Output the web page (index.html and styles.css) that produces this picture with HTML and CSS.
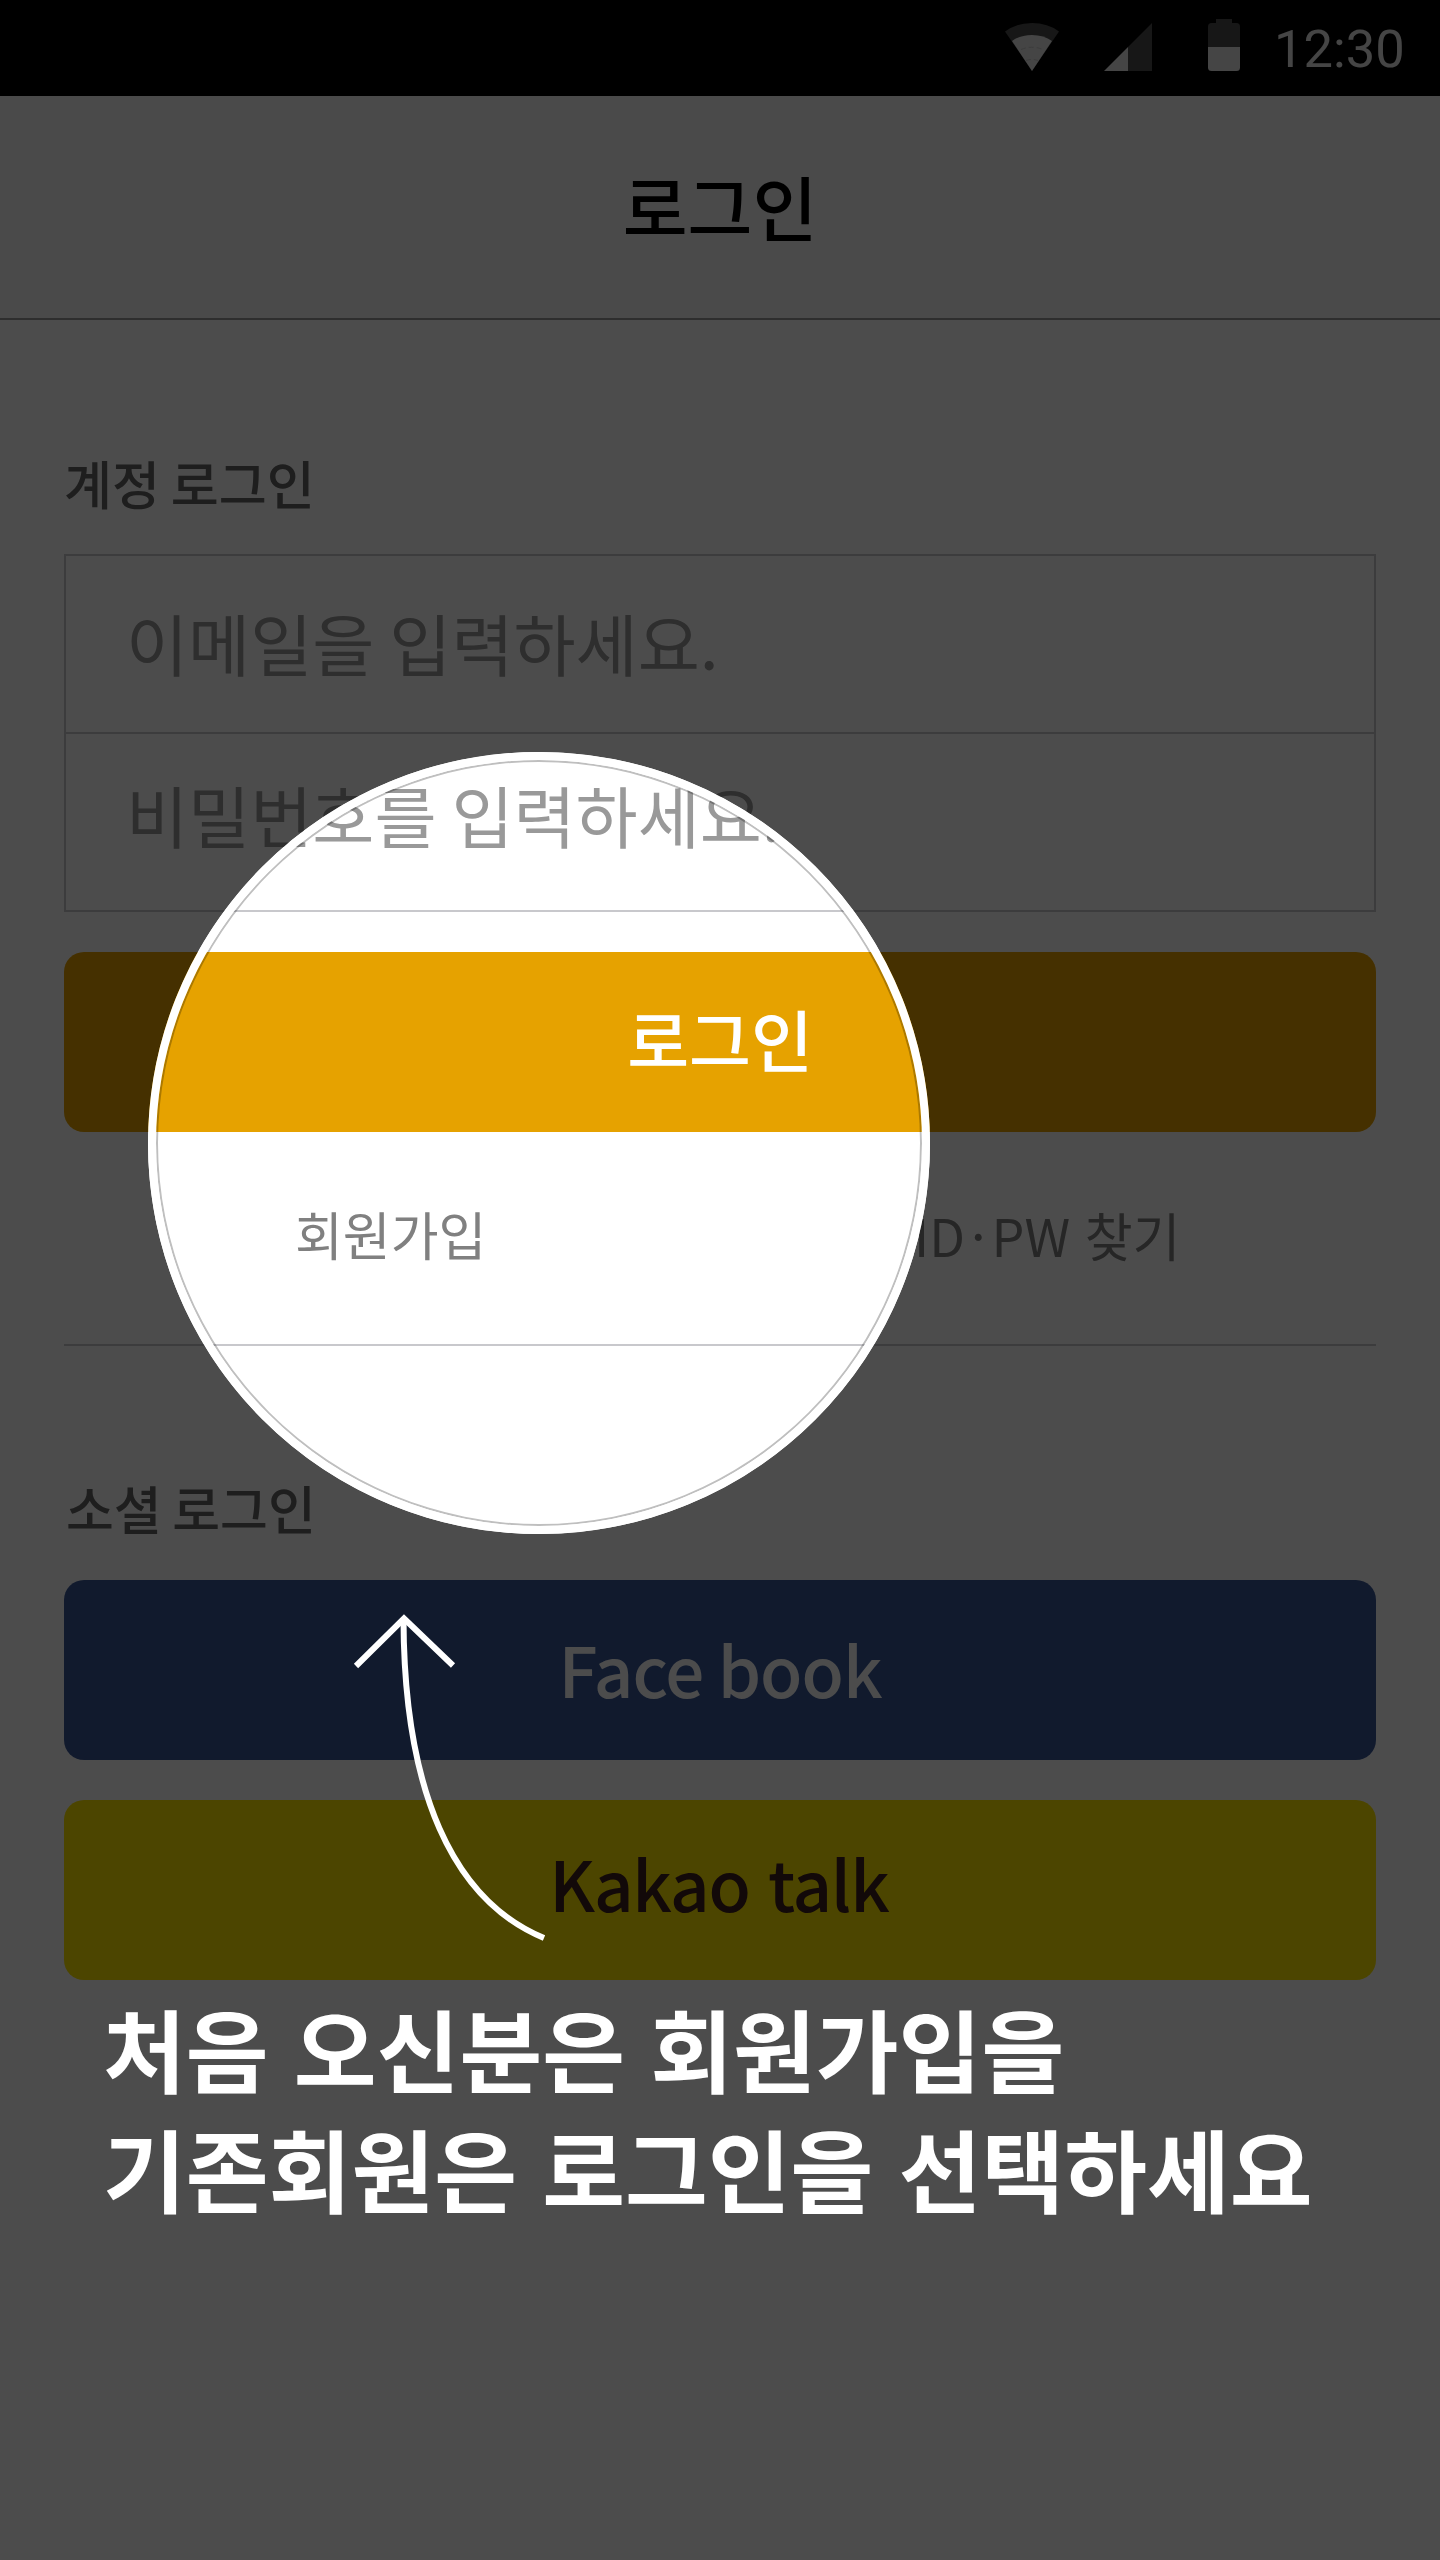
FILE: index.html
```html
<!DOCTYPE html>
<html lang="ko">
<head>
<meta charset="utf-8">
<title>로그인</title>
<link rel="stylesheet" href="styles.css">
</head>
<body>
<div class="screen">
  <div class="status-bar">
    <svg class="status-icons" width="240" height="96" viewBox="0 0 240 96" aria-hidden="true">
      <path class="icon-off" d="M5 31.5Q16 23 32 23T59 31.5L32 71Z"/>
      <path class="icon-on" d="M12 41Q20 35 32 35T52 41L32 71Z"/>
      <path class="icon-line" d="M21 49.500Q32 45 43 49.500M26 60.500Q32 58.500 38 60.500"/>
      <path class="icon-off" d="M128 47L152 23V71H128Z"/>
      <path class="icon-on" d="M104 71L128 47V71Z"/>
      <path class="icon-off" d="M208 47V26.500Q208 23 211.500 23H216V19H232V23H236.500Q240 23 240 26.500V47Z"/>
      <path class="icon-on" d="M208 47H240V67.500Q240 71 236.500 71H211.500Q208 71 208 67.500Z"/>
    </svg>
    <time class="clock">12:30</time>
  </div>
  <header class="title-bar"><h1 class="title">로그인</h1></header>
  <main class="content">
    <h2 class="section-label">계정 로그인</h2>
    <div class="fields">
      <div class="field">이메일을 입력하세요.</div>
      <div class="field field-password">비밀번호를 입력하세요.</div>
    </div>
    <div class="button button-login">로그인</div>
    <nav class="links">
      <a class="link">회원가입</a>
      <a class="link link-find">ID<span class="dot">·</span>PW 찾기</a>
    </nav>
    <h2 class="section-label section-label-social">소셜 로그인</h2>
    <div class="button button-facebook">Face book</div>
    <div class="button button-kakao">Kakao talk</div>
  </main>
  <div class="guide">
    <div class="spotlight"></div>
    <svg class="arrow" width="210" height="340" viewBox="350 1606 210 340" aria-hidden="true">
      <path d="M356 1666L404 1618.500L453 1665.500"/>
      <path d="M403.500 1619C404 1790 452 1900 544 1938"/>
    </svg>
    <p class="guide-text">처음 오신분은 회원가입을<br>기존회원은 로그인을 선택하세요</p>
  </div>
</div>
</body>
</html>
```
FILE: styles.css
```css
* { box-sizing: border-box; margin: 0; padding: 0; }

body {
  width: 1440px;
  font-family: "Noto Sans CJK KR", sans-serif;
  background: #fff;
}

.screen {
  position: relative;
  height: 2560px;
  overflow: hidden;
  background: #fff;
}

.status-bar {
  display: flex;
  justify-content: flex-end;
  height: 96px;
  padding-right: 36px;
  background: #000;
}
.status-icons { flex: none; margin-right: 34px; }
.icon-on { fill: #e6e6e6; }
.icon-off { fill: #4d4d4d; }
.icon-line { fill: none; stroke: #c8c8c8; stroke-width: 1; stroke-dasharray: 5 3; }
.clock {
  width: 130px;
  font: 400 52.500px/98px Roboto, sans-serif;
  color: #e6e6e6;
  white-space: nowrap;
}

.title-bar {
  height: 224px;
  background: #f8f8f8;
  border-bottom: 2px solid #999;
  text-align: center;
}
.title { font-size: 70.500px; font-weight: 500; line-height: 219px; color: #000; }

.content { padding: 118px 64px 0; }

.section-label {
  height: 116px;
  font-size: 52.200px;
  font-weight: 500;
  line-height: 88px;
  word-spacing: -4px;
  color: #666;
}
.fields { border: 2px solid #c8c8cc; }
.field {
  height: 176px;
  padding-left: 60px;
  font-size: 67.500px;
  line-height: 172px;
  word-spacing: -4px;
  color: #999;
}
.field-password {
  height: 178px;
  border-top: 2px solid #c8c8cc;
  line-height: 159px;
}

.button {
  height: 180px;
  margin-top: 40px;
  border-radius: 20px;
  font-size: 69px;
  font-weight: 500;
  text-align: center;
}
.button-login {
  font-size: 67.300px;
  line-height: 172px;
  background: #e6a200;
  color: #fff;
}
.button-facebook {
  margin-top: 0;
  line-height: 176px;
  letter-spacing: -1px;
  word-spacing: -4px;
  background: #3b5998;
  color: #fff;
}
.button-kakao {
  padding-right: 2px;
  line-height: 164px;
  letter-spacing: -1.200px;
  background: #ffe600;
  color: #3c1e1e;
}

.links {
  display: grid;
  grid-template-columns: 619px 1fr;
  height: 214px;
  padding-left: 231px;
  border-bottom: 2px solid #c8c8cc;
}
.link {
  font-size: 52px;
  line-height: 203px;
  color: #808080;
}
.link-find { line-height: 206px; }
.dot { margin: 0 6px; }
.section-label-social { margin-top: 118px; padding-left: 2px; font-size: 52px; }

.guide {
  position: absolute;
  inset: 0;
  overflow: hidden;
}
.spotlight {
  position: absolute;
  left: 148px;
  top: 752px;
  width: 782px;
  height: 782px;
  border: 8px solid #fff;
  border-radius: 50%;
  box-shadow: 0 0 0 2400px rgba(0, 0, 0, .7), inset 0 0 0 2px rgba(0, 0, 0, .25);
}
.arrow {
  position: absolute;
  left: 350px;
  top: 1606px;
  fill: none;
  stroke: #fff;
  stroke-width: 6;
}
.guide-text {
  position: absolute;
  left: 103px;
  top: 1987px;
  font-size: 90px;
  font-weight: 700;
  line-height: 120px;
  color: #fff;
  white-space: nowrap;
}
```
